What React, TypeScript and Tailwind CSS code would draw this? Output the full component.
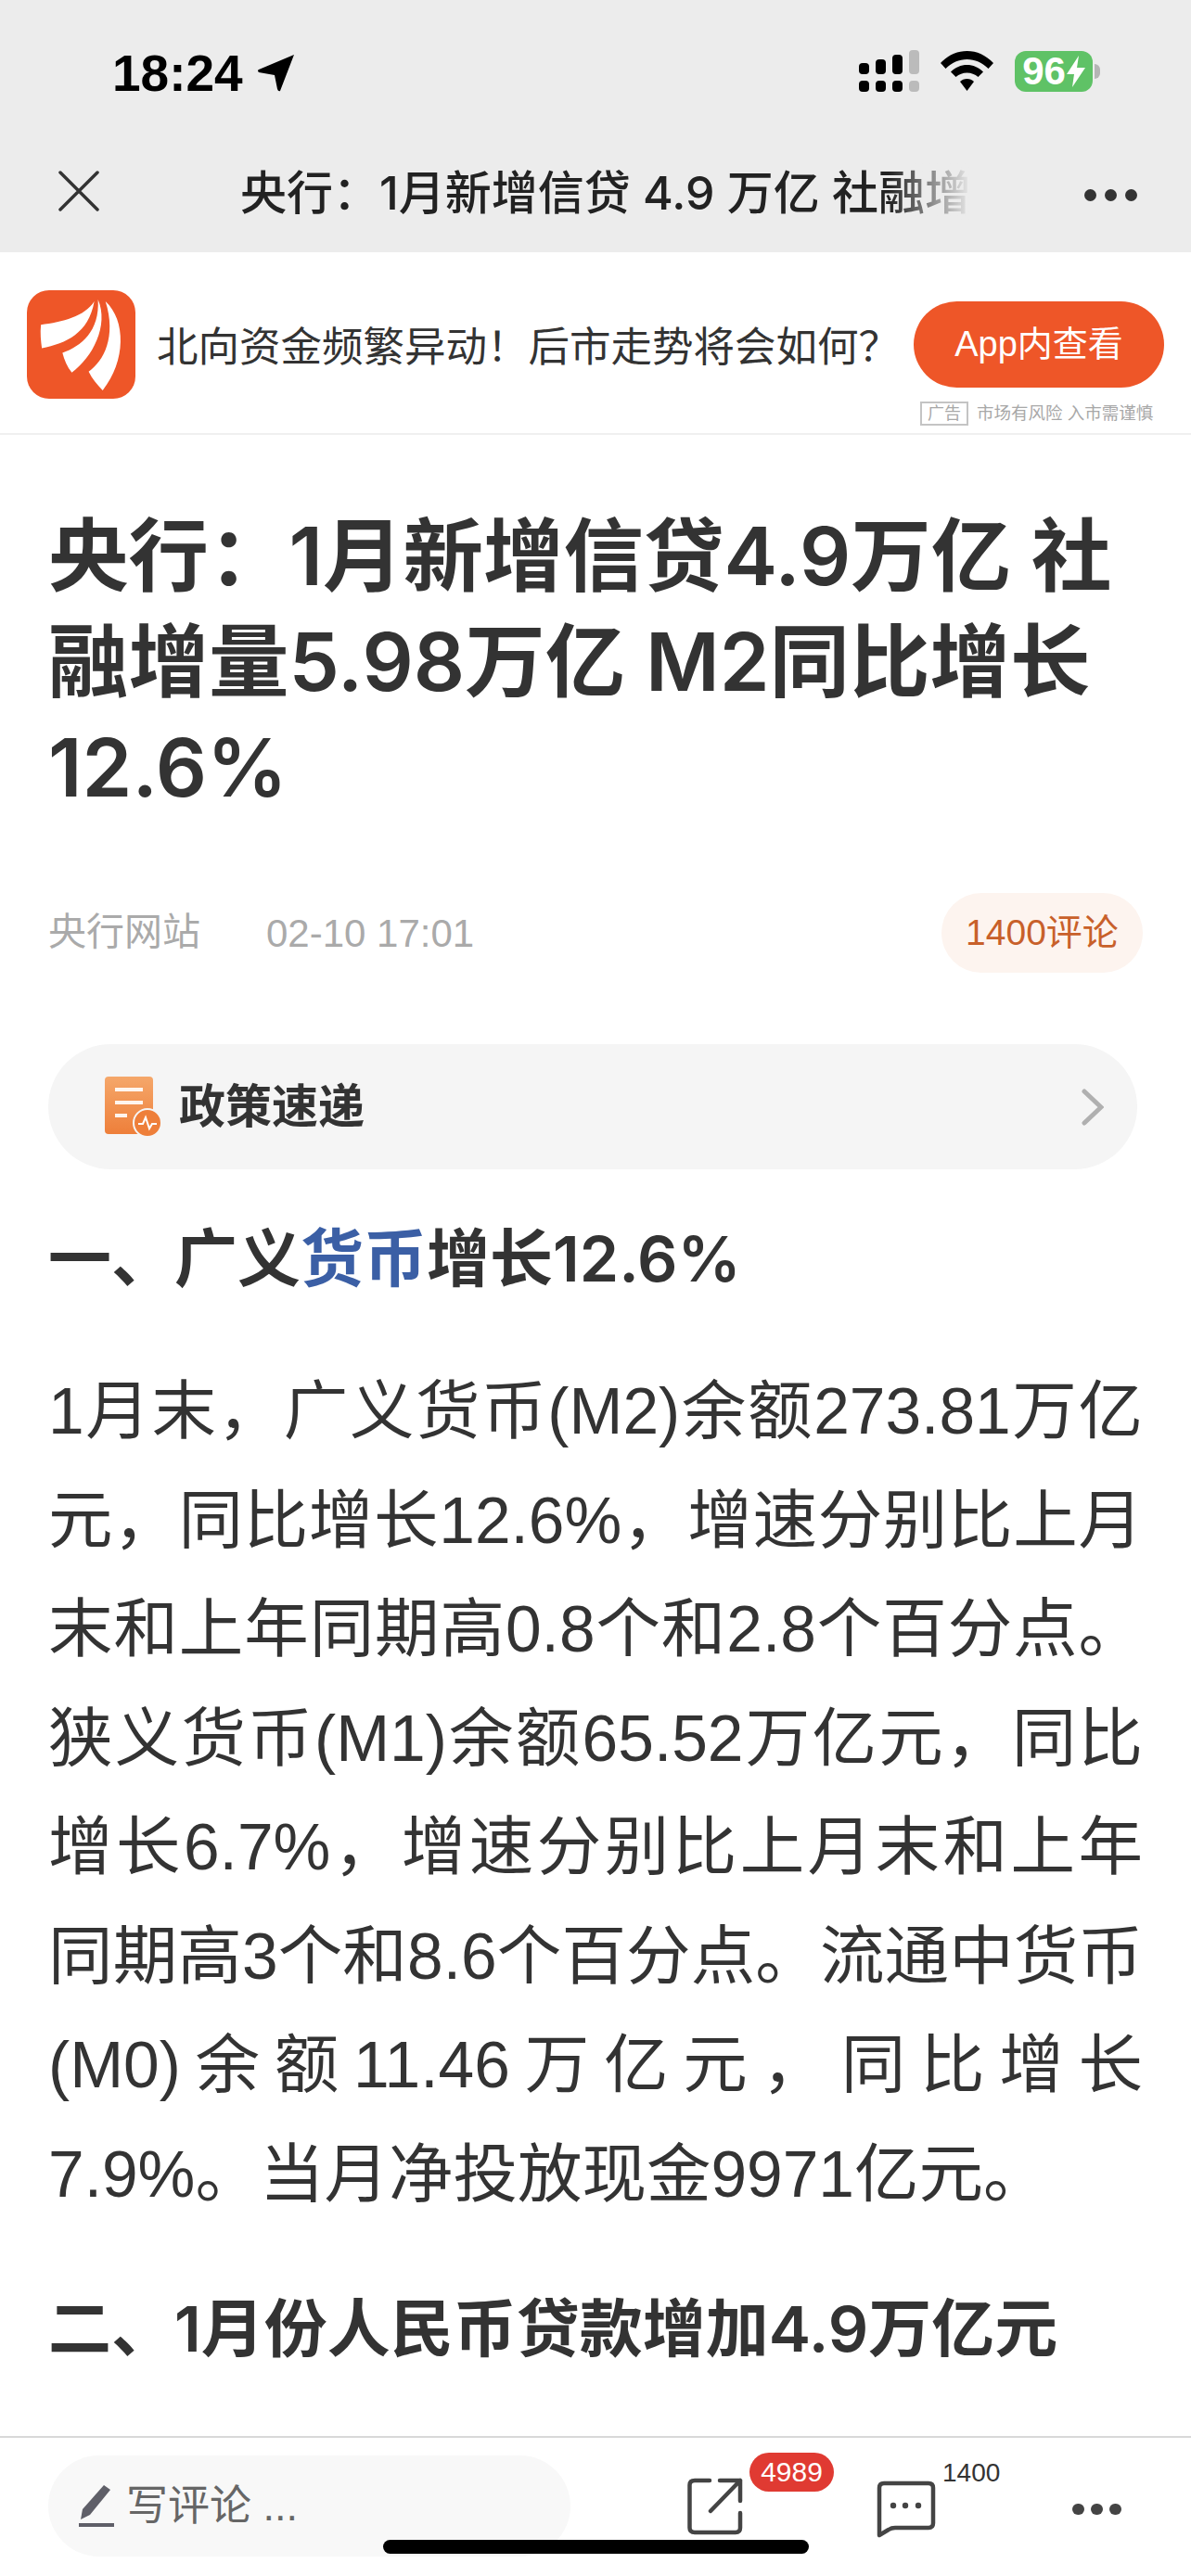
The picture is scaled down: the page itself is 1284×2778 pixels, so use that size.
function StatusBar() {
  const bars = [
    { x: 0, h: 12, fill: '#000' },
    { x: 18, h: 16, fill: '#000' },
    { x: 36, h: 21, fill: '#000' },
    { x: 54, h: 26, fill: '#bbb' },
  ];
  return (
    <div className="flex h-[124px] items-end justify-between pb-[25px] pl-[121px] pr-[98px]">
      <div className="flex items-center gap-[15px]">
        <span className="text-[55px] font-bold leading-[40px] text-black">18:24</span>
        <svg width="41" height="41" viewBox="0 0 41 41">
          <path d="M40 1 L25 40 Q23 41 22 38 L19 23 L2 20 Q0 18 2 17 Z" fill="#000" />
        </svg>
      </div>
      <div className="flex items-center gap-[23px]">
        <svg width="65" height="45" viewBox="0 0 65 45">
          {bars.map((b) => (
            <g key={b.x}>
              <rect x={b.x} y={26 - b.h} width="11" height={b.h} rx="4" fill={b.fill} />
              <rect x={b.x} y="33" width="11" height="12" rx="4" fill={b.fill} />
            </g>
          ))}
        </svg>
        <svg width="57" height="43" viewBox="0 0 57 43">
          <path d="M28.5 0 C39 0 49 4.500 57 13 L51.500 19 C45 12.500 37 9 28.500 9 C20 9 12 12.500 5.500 19 L0 13 C8 4.500 18 0 28.500 0 Z" fill="#000" />
          <path d="M28.500 15 C35 15 41 17.500 46 22.500 L40.500 28 C37 25 33 23.500 28.500 23.500 C24 23.500 20 25 16.500 28 L11 22.500 C16 17.500 22 15 28.500 15 Z" fill="#000" />
          <path d="M28.500 30 C31.500 30 34 31 36 33 L28.500 43 L21 33 C23 31 25.500 30 28.500 30 Z" fill="#000" />
        </svg>
        <div className="flex items-center gap-[2px]">
          <div className="flex h-[44px] w-[84px] items-center justify-center gap-[1px] rounded-[12px] bg-[#5fc266]">
            <span className="text-[42px] font-bold leading-none text-white">96</span>
            <svg width="20" height="34" viewBox="0 0 20 34">
              <path d="M13 0 L0 20 L8 20 L6 34 L20 13 L11 13 Z" fill="#fff" />
            </svg>
          </div>
          <div className="h-[16px] w-[6px] rounded-r-full bg-[#b5b5b5]" />
        </div>
      </div>
    </div>
  );
}

function NavBar() {
  return (
    <div className="flex h-[148px] items-start pl-[63px] pr-[58px] pt-[38px]">
      <svg width="44" height="44" viewBox="0 0 44 44" className="mt-[22px]" stroke="#333" strokeWidth="3.500" strokeLinecap="round">
        <path d="M2 2 L42 42 M42 2 L2 42" />
      </svg>
      <div className="relative ml-[152px] mt-[14px] h-[64px] w-[789px] overflow-hidden whitespace-nowrap font-['Inter','Noto_Sans_CJK_SC',sans-serif] text-[50px] font-medium leading-[64px] text-[#222]">
        央行：1月新增信贷 4.9 万亿 社融增
        <div className="absolute inset-y-0 right-0 w-[90px] bg-gradient-to-r from-transparent to-[#ececec]" />
      </div>
      <div className="ml-auto mt-[42px] flex gap-[9px]">
        <div className="h-[13px] w-[13px] rounded-full bg-[#333]" />
        <div className="h-[13px] w-[13px] rounded-full bg-[#333]" />
        <div className="h-[13px] w-[13px] rounded-full bg-[#333]" />
      </div>
    </div>
  );
}

function AdBanner() {
  return (
    <div className="flex h-[197px] border-b-2 border-[#f0f0f0] bg-white pl-[29px] pr-[29px] pt-[41px]">
      <div className="flex h-[117px] w-[117px] shrink-0 items-center justify-center rounded-[24px] bg-[#ee5628]">
        <svg width="117" height="117" viewBox="0 0 116 116" fill="#fff">
          <path d="M72 12 C62 28 38 34 15 37 C14 46 15 55 16 62 C42 57 66 46 72 12 Z" />
          <path d="M76 10 C88 38 70 72 48 88 C43 82 40 75 38 67 C58 60 78 44 76 10 Z" />
          <path d="M84 12 C106 32 106 76 81 107 C75 101 70 95 66 87 C82 76 96 50 84 12 Z" />
        </svg>
      </div>
      <div className="ml-[23px] mt-[30px] h-[64px] whitespace-nowrap text-[44.500px] leading-[64px] text-[#333]">
        北向资金频繁异动！后市走势将会如何？
      </div>
      <div className="ml-auto flex w-[270px] shrink-0 flex-col items-stretch">
        <div className="mt-[12px] flex h-[93px] items-center justify-center rounded-full bg-[#ee5628] text-[38px] text-white">
          App内查看
        </div>
        <div className="mt-[15px] flex items-center whitespace-nowrap text-[#a8a8a8]">
          <span className="ml-[7px] flex h-[26px] w-[52px] items-center justify-center border-2 border-[#c4c4c4] text-[18px] leading-none">广告</span>
          <span className="ml-[9px] text-[18.500px] leading-none">市场有风险 入市需谨慎</span>
        </div>
      </div>
    </div>
  );
}

function Article() {
  return (
    <div className="flex-1 overflow-hidden bg-white pl-[52px] pr-[52px] pt-[74px]">
      <h1 className="font-['Inter','Noto_Sans_CJK_SC',sans-serif] text-[86.500px] font-semibold leading-[114px] text-[#333]">
        央行：1月新增信贷4.9万亿 社融增量5.98万亿 M2同比增长12.6%
      </h1>
      <div className="mt-[78px] flex items-center justify-between">
        <div className="flex items-center text-[#aaa]">
          <span className="text-[41px]">央行网站</span>
          <span className="ml-[71px] text-[42px]">02-10 17:01</span>
        </div>
        <div className="flex h-[86px] w-[217px] items-center justify-center rounded-full bg-[#fdf4ef] text-[39px] text-[#c8602a]">
          1400评论
        </div>
      </div>
      <div className="mr-[6px] mt-[77px] flex h-[135px] items-center rounded-full bg-[#f5f5f5] pl-[61px] pr-[36px]">
        <svg width="64" height="66" viewBox="0 0 64 66">
          <defs>
            <linearGradient id="doc" x1="0" y1="0" x2="0" y2="1">
              <stop offset="0" stopColor="#f5a76a" />
              <stop offset="1" stopColor="#ee7f3a" />
            </linearGradient>
          </defs>
          <rect x="0" y="0" width="52" height="62" rx="4" fill="url(#doc)" />
          <rect x="11" y="12" width="30" height="4" fill="#fff" opacity="0.9" />
          <rect x="11" y="26" width="30" height="4" fill="#fff" opacity="0.9" />
          <rect x="11" y="40" width="13" height="4" fill="#fff" opacity="0.9" />
          <circle cx="46" cy="50" r="15" fill="#ee7f3a" stroke="#f5f5f5" strokeWidth="2" />
          <path d="M36 51 H41 L44 44 L48 56 L51 51 H56" fill="none" stroke="#fff" strokeWidth="2" />
        </svg>
        <span className="ml-[16px] text-[50px] font-bold leading-none text-[#333]">政策速递</span>
        <svg width="24" height="40" viewBox="0 0 24 40" className="ml-auto" fill="none" stroke="#b0b0b0" strokeWidth="5" strokeLinecap="round">
          <path d="M3 3 L21 20 L3 37" />
        </svg>
      </div>
      <h2 className="mt-[54px] font-['Inter','Noto_Sans_CJK_SC',sans-serif] text-[68px] font-semibold leading-[84px] text-[#333]">
        一、广义<span className="text-[#3b5fa5]">货币</span>增长12.6%
      </h2>
      <p className="mt-[65px] text-justify text-[69.500px] leading-[117.500px] text-[#333]">
        1月末，广义货币(M2)余额273.81万亿元，同比增长12.6%，增速分别比上月末和上年同期高0.8个和2.8个百分点。狭义货币(M1)余额65.52万亿元，同比增长6.7%，增速分别比上月末和上年同期高3个和8.6个百分点。流通中货币(M0)余额11.46万亿元，同比增长7.9%。当月净投放现金9971亿元。
      </p>
      <h2 className="mt-[65px] font-['Inter','Noto_Sans_CJK_SC',sans-serif] text-[68px] font-semibold leading-[84px] text-[#333]">
        二、1月份人民币贷款增加4.9万亿元
      </h2>
    </div>
  );
}

function BottomBar() {
  return (
    <div className="relative flex h-[151px] items-start border-t-2 border-[#d8d8d8] bg-white pl-[52px]">
      <div className="mt-[19px] flex h-[109px] w-[563px] items-center rounded-full bg-[#f8f8f8] pl-[33px]">
        <svg width="38" height="46" viewBox="0 0 38 46">
          <path d="M27 0 L34 5 L12 32 L2 37 L4 26 Z" fill="#5f5f68" />
          <rect x="0" y="41" width="38" height="4" fill="#5f5f68" />
        </svg>
        <span className="ml-[13px] text-[45px] leading-none text-[#666]">写评论 ...</span>
      </div>
      <div className="relative ml-[126px] mt-[43px]">
        <svg width="61" height="62" viewBox="0 0 61 62" fill="none" stroke="#444" strokeWidth="4.500" strokeLinecap="round" strokeLinejoin="round">
          <path d="M24 3 H8 Q2.500 3 2.500 8 V54 Q2.500 59 8 59 H52 Q57 59 57 54 V38" />
          <path d="M35 3 H57 V25 M57 3 L25 36" />
        </svg>
        <div className="absolute -top-[27px] left-[67px] flex h-[42px] w-[91px] items-center justify-center rounded-full bg-[#e03a32] text-[30px] leading-none text-white">
          4989
        </div>
      </div>
      <div className="relative ml-[143px] mt-[46px]">
        <svg width="64" height="62" viewBox="0 0 64 62" fill="none" stroke="#444" strokeWidth="4.500" strokeLinejoin="round">
          <path d="M8 3 H56 Q61 3 61 8 V46 Q61 51 56 51 H20 Q16 51 13 53 L3 59 V8 Q3 3 8 3 Z" />
          <circle cx="18" cy="27" r="3.200" fill="#444" stroke="none" />
          <circle cx="31" cy="27" r="3.200" fill="#444" stroke="none" />
          <circle cx="45" cy="27" r="3.200" fill="#444" stroke="none" />
        </svg>
        <span className="absolute -top-[22px] left-[71px] text-[28px] leading-none text-[#333]">1400</span>
      </div>
      <div className="ml-[147px] mt-[71px] flex gap-[7px]">
        <div className="h-[12px] w-[13px] rounded-full bg-[#444]" />
        <div className="h-[12px] w-[13px] rounded-full bg-[#444]" />
        <div className="h-[12px] w-[13px] rounded-full bg-[#444]" />
      </div>
      <div className="absolute bottom-[24px] left-[413px] h-[15px] w-[459px] rounded-full bg-black" />
    </div>
  );
}

export default function App() {
  return (
    <div className="flex h-[2778px] w-[1284px] flex-col overflow-hidden bg-white font-['Liberation_Sans','Noto_Sans_CJK_SC',sans-serif]">
      <div className="bg-[#ececec]">
        <StatusBar />
        <NavBar />
      </div>
      <AdBanner />
      <Article />
      <BottomBar />
    </div>
  );
}
